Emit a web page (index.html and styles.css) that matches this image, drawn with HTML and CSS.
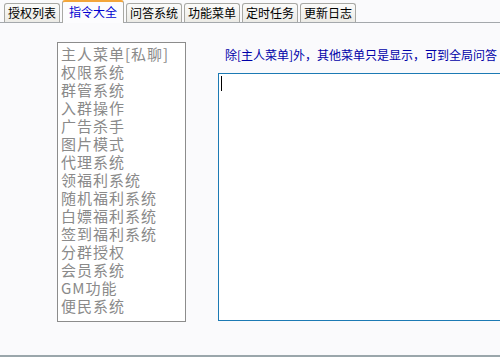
FILE: index.html
```
<!DOCTYPE html>
<html lang="zh-CN">
<head>
    <meta charset="UTF-8">
    <meta name="viewport" content="width=device-width, initial-scale=1.0">
    <title>指令大全</title>
    <link rel="stylesheet" href="styles.css">
</head>
<body>
    <div class="window">
        <div class="tabs">
            <div class="tab">授权列表</div>
            <div class="tab active">指令大全</div>
            <div class="tab">问答系统</div>
            <div class="tab">功能菜单</div>
            <div class="tab">定时任务</div>
            <div class="tab">更新日志</div>
        </div>
        <div class="page">
            <ul class="menu-list">
                <li>主人菜单[私聊]</li>
                <li>权限系统</li>
                <li>群管系统</li>
                <li>入群操作</li>
                <li>广告杀手</li>
                <li>图片模式</li>
                <li>代理系统</li>
                <li>领福利系统</li>
                <li>随机福利系统</li>
                <li>白嫖福利系统</li>
                <li>签到福利系统</li>
                <li>分群授权</li>
                <li>会员系统</li>
                <li>GM功能</li>
                <li>便民系统</li>
            </ul>
            <div class="detail">
                <p class="hint">除[主人菜单]外，其他菜单只是显示，可到全局问答</p>
                <div class="memo"><span class="caret"></span></div>
            </div>
        </div>
    </div>
</body>
</html>
```

FILE: styles.css
```
html, body {
    margin: 0;
    padding: 0;
    background-color: #fafafc;
    font-family: "Noto Sans CJK SC", "Noto Sans", sans-serif;
}
.window {
    width: 500px;
    height: 355px;
    border-bottom: 2px solid #9aa6ab;
    overflow: hidden;
}
.tabs {
    display: flex;
    align-items: flex-end;
    gap: 2px;
    height: 22px;
    padding-left: 4px;
    border-bottom: 1px solid #a4a8ac;
    background-color: #fafafc;
}
.tab {
    height: 18px;
    line-height: 18px;
    padding: 0 3px;
    font-size: 12px;
    color: #000;
    background: linear-gradient(#fbfbfa, #ecebe6);
    border: 1px solid #a8a8a4;
    border-bottom: none;
    border-radius: 3px 3px 0 0;
}
.tab.active {
    height: 21px;
    line-height: 20px;
    padding: 0 6px;
    color: #0000d0;
    background: #fcfcfe;
    border-top: 2px solid #f3a53a;
    margin-bottom: -1px;
    position: relative;
}
.page {
    display: flex;
    align-items: flex-start;
}
.menu-list {
    flex-shrink: 0;
    list-style: none;
    margin: 19px 0 0 57px;
    padding: 2px 0 0 3px;
    width: 124px;
    height: 276px;
    background-color: #fff;
    border: 1px solid #8c8c8c;
    font-size: 15px;
    letter-spacing: 1px;
    line-height: 18px;
    color: #8a8a8a;
    overflow: hidden;
}
.menu-list li {
    height: 18px;
    white-space: nowrap;
}
.detail {
    flex-shrink: 0;
    margin-left: 32px;
    width: 300px;
}
.hint {
    margin: 25px 0 0 7px;
    font-size: 12px;
    line-height: 14px;
    color: #0000a8;
    white-space: nowrap;
}
.memo {
    margin-top: 11px;
    height: 244px;
    background-color: #fff;
    border: 1px solid #1c7ab4;
    padding: 2px 0 0 2px;
}
.caret {
    display: block;
    width: 1px;
    height: 15px;
    background-color: #000;
}
```
